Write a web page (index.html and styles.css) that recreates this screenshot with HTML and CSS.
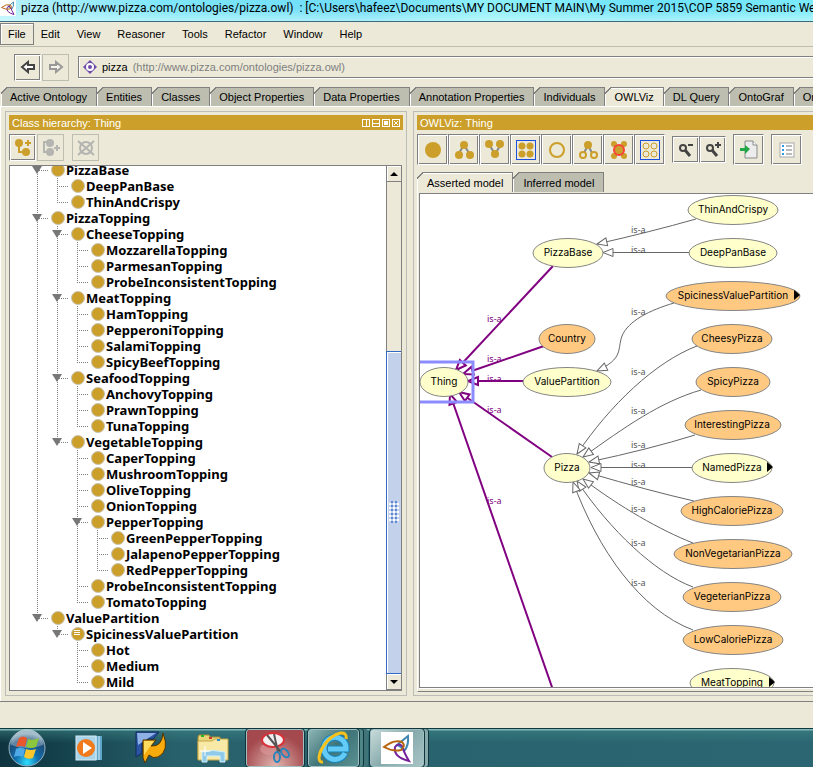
FILE: index.html
```html
<!DOCTYPE html>
<html lang="en">
<head>
<meta charset="utf-8">
<title>pizza (http://www.pizza.com/ontologies/pizza.owl)</title>
<link rel="stylesheet" href="styles.css">
</head>
<body>
<svg class="defs" width="0" height="0" aria-hidden="true">
  <defs>
    <symbol id="protege" viewBox="0 0 32 32">
      <g fill="none" stroke-width="2">
        <path d="M27 4Q28 14 23 19Q20 14 16 13Q21 9 27 4Z" stroke="#3f86b0"/>
        <path d="M28 29Q12 25 14 15Q18 10 22 15Q22 19 28 29Z" stroke="#74209a"/>
        <path d="M3 15Q13 7 21 10Q25 14 20 18Q12 20 3 15Z" stroke="#b8640c"/>
      </g>
    </symbol>
  </defs>
</svg>

<header class="titlebar">
  <svg class="app-icon" width="16" height="16"><rect width="16" height="16" fill="#fff"/><use href="#protege" width="16" height="16"/></svg>
  <span class="title-text">pizza (http://www.pizza.com/ontologies/pizza.owl)&nbsp; : [C:\Users\hafeez\Documents\MY DOCUMENT MAIN\My Summer 2015\COP 5859 Semantic Web</span>
</header>

<nav class="menubar">
  <button class="menu open">File</button>
  <button class="menu">Edit</button>
  <button class="menu">View</button>
  <button class="menu">Reasoner</button>
  <button class="menu">Tools</button>
  <button class="menu">Refactor</button>
  <button class="menu">Window</button>
  <button class="menu">Help</button>
</nav>

<div class="locationbar">
  <button class="tool" aria-label="Back"><svg width="16" height="14" fill="#fff" stroke="#444" stroke-width="2"><path d="M2 7L8 2V5H14V9H8V12Z"/></svg></button>
  <button class="tool disabled" aria-label="Forward" disabled><svg width="16" height="14" fill="#f6f4ea" stroke="#999" stroke-width="2"><path d="M14 7L8 2V5H2V9H8V12Z"/></svg></button>
  <div class="address">
    <svg width="14" height="14"><path d="M7 0L14 7L7 14L0 7Z" fill="#6f4ca8"/><circle cx="7" cy="7" r="3" fill="none" stroke="#fff" stroke-width="2"/></svg>
    <span>pizza</span><span class="iri">(http://www.pizza.com/ontologies/pizza.owl)</span>
  </div>
</div>

<nav class="tabs main-tabs">
  <button class="tab">Active Ontology</button>
  <button class="tab">Entities</button>
  <button class="tab">Classes</button>
  <button class="tab">Object Properties</button>
  <button class="tab">Data Properties</button>
  <button class="tab">Annotation Properties</button>
  <button class="tab">Individuals</button>
  <button class="tab active">OWLViz</button>
  <button class="tab">DL Query</button>
  <button class="tab">OntoGraf</button>
  <button class="tab">Ontology Differences</button>
</nav>

<main class="workspace">
  <section class="panel hierarchy">
    <h2 class="panel-title">Class hierarchy: Thing
      <svg width="38" height="8" fill="none" stroke="#fff" stroke-width="1" shape-rendering="crispEdges"><path d="M.5 .5H7.5V7.5H.5ZM4 0V8M10.500 .5H17.500V7.500H10.500ZM10 4H18M20.500 .5H27.500V7.500H20.500ZM30.500 .5H37.500V7.500H30.500Z"/><path d="M22 2H26V6H22Z" fill="#fff" stroke="none"/><path d="M32 2L36 6M36 2L32 6" shape-rendering="auto"/></svg>
    </h2>
    <div class="toolbar">
      <button class="tool" aria-label="Add subclass"><svg width="18" height="18" fill="#cc9f2a"><path d="M11 4H17M14 1V7M5 5V13H12" fill="none" stroke="#cc9f2a" stroke-width="2"/><circle cx="5" cy="4" r="4"/><circle cx="12" cy="13" r="4"/></svg></button>
      <button class="tool disabled" aria-label="Add sibling class" disabled><svg width="18" height="18" fill="#b4b4b0"><path d="M7 3H2V13H7M12 9H18M15 6V12" fill="none" stroke="#b4b4b0" stroke-width="2"/><circle cx="8" cy="4" r="4"/><circle cx="8" cy="13" r="4"/></svg></button>
      <button class="tool disabled spaced" aria-label="Delete class" disabled><svg width="18" height="18" fill="none" stroke="#b4b4b0" stroke-width="2"><circle cx="9" cy="9" r="6"/><path d="M1 2L17 16M17 2L1 16"/></svg></button>
    </div>
    <div class="treebox">
      <div class="tree-view">
        <ul class="tree root">
          <li class="branch"><span class="row open">PizzaBase</span>
            <ul class="tree"><li><span class="row">DeepPanBase</span></li><li><span class="row">ThinAndCrispy</span></li></ul>
          </li>
          <li class="branch"><span class="row open">PizzaTopping</span>
            <ul class="tree">
              <li><span class="row open">CheeseTopping</span>
                <ul class="tree"><li><span class="row">MozzarellaTopping</span></li><li><span class="row">ParmesanTopping</span></li><li><span class="row">ProbeInconsistentTopping</span></li></ul>
              </li>
              <li><span class="row open">MeatTopping</span>
                <ul class="tree"><li><span class="row">HamTopping</span></li><li><span class="row">PepperoniTopping</span></li><li><span class="row">SalamiTopping</span></li><li><span class="row">SpicyBeefTopping</span></li></ul>
              </li>
              <li><span class="row open">SeafoodTopping</span>
                <ul class="tree"><li><span class="row">AnchovyTopping</span></li><li><span class="row">PrawnTopping</span></li><li><span class="row">TunaTopping</span></li></ul>
              </li>
              <li><span class="row open">VegetableTopping</span>
                <ul class="tree">
                  <li><span class="row">CaperTopping</span></li><li><span class="row">MushroomTopping</span></li><li><span class="row">OliveTopping</span></li><li><span class="row">OnionTopping</span></li>
                  <li><span class="row open">PepperTopping</span>
                    <ul class="tree"><li><span class="row">GreenPepperTopping</span></li><li><span class="row">JalapenoPepperTopping</span></li><li><span class="row">RedPepperTopping</span></li></ul>
                  </li>
                  <li><span class="row">ProbeInconsistentTopping</span></li><li><span class="row">TomatoTopping</span></li>
                </ul>
              </li>
            </ul>
          </li>
          <li class="branch"><span class="row open">ValuePartition</span>
            <ul class="tree">
              <li><span class="row open defined">SpicinessValuePartition</span>
                <ul class="tree"><li><span class="row">Hot</span></li><li><span class="row">Medium</span></li><li><span class="row">Mild</span></li></ul>
              </li>
            </ul>
          </li>
        </ul>
      </div>
      <div class="scrollbar">
        <button class="arrow" aria-label="Scroll up"><svg width="8" height="4"><path d="M0 4L4 0L8 4Z"/></svg></button>
        <div class="track"></div>
        <div class="thumb"><span class="grip"></span></div>
        <button class="arrow" aria-label="Scroll down"><svg width="8" height="4"><path d="M0 0L4 4L8 0Z"/></svg></button>
      </div>
    </div>
  </section>

  <section class="panel viz">
    <h2 class="panel-title">OWLViz: Thing</h2>
    <div class="toolbar">
      <button class="tool big" aria-label="Show class"><svg width="22" height="22" fill="#cc9f2a"><circle cx="11" cy="11" r="8"/></svg></button>
      <button class="tool big" aria-label="Show subclasses"><svg width="22" height="22" fill="#cc9f2a"><path d="M6 14L11 6L16 14" fill="none" stroke="#888" stroke-width="2"/><circle cx="11" cy="6" r="4"/><circle cx="6" cy="16" r="4"/><circle cx="17" cy="16" r="4"/></svg></button>
      <button class="tool big" aria-label="Show superclasses"><svg width="22" height="22" fill="#cc9f2a"><path d="M6 7L11 15L16 7" fill="none" stroke="#888" stroke-width="2"/><circle cx="11" cy="15" r="4"/><circle cx="5" cy="5" r="4"/><circle cx="16" cy="5" r="4"/></svg></button>
      <button class="tool big" aria-label="Show all classes"><svg width="22" height="22" fill="#cc9f2a"><rect x="1.500" y="1.500" width="19" height="19" fill="none" stroke="#1e4fd8"/><circle cx="7" cy="7" r="3.500"/><circle cx="15" cy="7" r="3.500"/><circle cx="7" cy="15" r="3.500"/><circle cx="15" cy="15" r="3.500"/></svg></button>
      <button class="tool big" aria-label="Hide class"><svg width="22" height="22" fill="none" stroke="#cc9f2a" stroke-width="2"><circle cx="11" cy="11" r="7"/></svg></button>
      <button class="tool big" aria-label="Hide subclasses"><svg width="22" height="22" fill="none" stroke="#cc9f2a" stroke-width="2"><path d="M7 14L11 6L15 14" stroke="#888"/><circle cx="11" cy="6" r="3" fill="#cc9f2a"/><circle cx="6" cy="16" r="3" fill="#ece9d8"/><circle cx="17" cy="16" r="3" fill="#ece9d8"/></svg></button>
      <button class="tool big" aria-label="Hide past radius"><svg width="22" height="22" fill="#cc9f2a"><path d="M5 5L17 17M17 5L5 17" stroke="#888" stroke-width="2"/><circle cx="6" cy="5" r="3"/><circle cx="16" cy="5" r="3"/><circle cx="6" cy="17" r="3"/><circle cx="16" cy="17" r="3"/><circle cx="11" cy="11" r="5" stroke="#fa4238" stroke-width="2"/></svg></button>
      <button class="tool big" aria-label="Hide all classes"><svg width="22" height="22" fill="none" stroke="#cc9f2a"><rect x="1.500" y="1.500" width="19" height="19" stroke="#1e4fd8"/><circle cx="7" cy="7" r="3"/><circle cx="15" cy="7" r="3"/><circle cx="7" cy="15" r="3"/><circle cx="15" cy="15" r="3"/></svg></button>
      <button class="tool spaced" aria-label="Zoom out"><svg width="18" height="18" fill="none" stroke="#444" stroke-width="2"><circle cx="6" cy="7" r="3"/><path d="M8 9L13 15" stroke-width="3"/><path d="M11 4H16"/></svg></button>
      <button class="tool" aria-label="Zoom in"><svg width="18" height="18" fill="none" stroke="#444" stroke-width="2"><circle cx="6" cy="7" r="3"/><path d="M8 9L13 15" stroke-width="3"/><path d="M11 4H17M14 1V7"/></svg></button>
      <button class="tool big spaced" aria-label="Export"><svg width="22" height="22"><path d="M7 2H15L19 6V19H7Z" fill="#ececec" stroke="#8a8a8a"/><path d="M15 2V6H19" fill="#fff" stroke="#8a8a8a"/><path d="M2 9H7V6L12 10L7 15V12H2Z" fill="#22a746"/></svg></button>
      <button class="tool big spaced" aria-label="Options"><svg width="22" height="22"><rect x="4" y="4" width="14" height="14" fill="#fff" stroke="#aaa"/><path d="M6 7H8M6 11H8M6 15H8" stroke="#2d9be0" stroke-width="2"/><path d="M10 7H16M10 11H16M10 15H16" stroke="#777"/></svg></button>
    </div>
    <div class="tabs model-tabs">
      <button class="tab active">Asserted model</button>
      <button class="tab">Inferred model</button>
    </div>
    <div class="model-pane">
    <div class="canvas">
      <svg class="graph" width="800" height="493">
        <defs>
          <marker id="arrow" markerUnits="userSpaceOnUse" markerWidth="13" markerHeight="12" refX="11" refY="6" orient="auto"><path d="M11 6L1 2V10Z" fill="#fff" stroke="#666"/></marker>
          <marker id="arrow-hot" markerUnits="userSpaceOnUse" markerWidth="14" markerHeight="14" refX="12" refY="7" orient="auto"><path d="M12 7L2 3V11Z" fill="#fff" stroke="#800080" stroke-width="2"/></marker>
        </defs>
        <g transform="translate(-420 -194)">
          <g class="edge">
            <path d="M696 219Q650 232 597 244"/><path d="M689 252.500H603"/>
            <path d="M674 303C650 310 628 321 622 336C617 350 624 358 597 371"/>
            <path d="M697 346C655 362 610 405 577 454"/><path d="M701 390C660 402 625 427 583 457"/>
            <path d="M695 435Q650 449 589 462"/><path d="M692 467.500H591"/><path d="M694 501Q650 491 589 473"/>
            <path d="M693 543C660 530 620 507 583 479"/><path d="M693 587C655 573 610 530 577 481"/><path d="M693 630C640 610 598 550 573 482"/>
          </g>
          <g class="hot">
            <path d="M553 266L456 370"/><path d="M544 346L463 374"/><path d="M523 381H468"/><path d="M552 457L459 392"/><path d="M553 690L450 394"/>
          </g>
          <g class="label">
            <text x="631" y="233">is-a</text><text x="631" y="253">is-a</text><text x="631" y="315">is-a</text><text x="631" y="375">is-a</text><text x="631" y="414">is-a</text><text x="631" y="448">is-a</text><text x="631" y="468">is-a</text><text x="631" y="485">is-a</text><text x="631" y="512">is-a</text><text x="631" y="546">is-a</text><text x="631" y="586">is-a</text>
          </g>
          <g class="label hot-label">
            <text x="487" y="322">is-a</text><text x="487" y="362">is-a</text><text x="487" y="382">is-a</text><text x="487" y="413">is-a</text><text x="487" y="504">is-a</text>
          </g>
          <g class="node">
            <ellipse cx="733" cy="210" rx="45" ry="14.500"/><ellipse cx="733" cy="253" rx="44" ry="14.500"/><ellipse cx="568" cy="253" rx="35" ry="14.500"/>
            <ellipse cx="567" cy="382" rx="44" ry="14.500"/><ellipse cx="444" cy="382" rx="24" ry="14.500"/><ellipse cx="732" cy="468" rx="40" ry="14.500"/>
            <ellipse cx="567" cy="468" rx="23" ry="14.500"/><ellipse cx="732" cy="683" rx="42" ry="14.500"/>
          </g>
          <g class="node defined-node">
            <ellipse cx="733" cy="296" rx="67" ry="14.500"/><ellipse cx="567" cy="339" rx="28" ry="14.500"/><ellipse cx="732" cy="339" rx="40" ry="14.500"/>
            <ellipse cx="733" cy="382" rx="37" ry="14.500"/><ellipse cx="733" cy="425" rx="48" ry="14.500"/><ellipse cx="732" cy="511" rx="51" ry="14.500"/>
            <ellipse cx="733" cy="554" rx="59" ry="14.500"/><ellipse cx="732" cy="597" rx="49" ry="14.500"/><ellipse cx="733" cy="640" rx="50" ry="14.500"/>
          </g>
          <path d="M794 290L800 295L794 300ZM767 462L773 467L767 472ZM769 677L775 682L769 687Z"/>
          <g class="name">
            <text x="733" y="213">ThinAndCrispy</text><text x="733" y="256">DeepPanBase</text><text x="568" y="256">PizzaBase</text><text x="733" y="299">SpicinessValuePartition</text>
            <text x="567" y="342">Country</text><text x="732" y="342">CheesyPizza</text><text x="567" y="385">ValuePartition</text><text x="733" y="385">SpicyPizza</text>
            <text x="444" y="385">Thing</text><text x="732" y="428">InterestingPizza</text><text x="732" y="471">NamedPizza</text><text x="567" y="471">Pizza</text>
            <text x="732" y="514">HighCaloriePizza</text><text x="733" y="557">NonVegetarianPizza</text><text x="732" y="600">VegeterianPizza</text><text x="733" y="643">LowCaloriePizza</text><text x="732" y="686">MeatTopping</text>
          </g>
          <path d="M420 362H473V402H420" fill="none" stroke="#8c8cff" stroke-width="3"/>
        </g>
      </svg>
    </div>
    </div>
  </section>
</main>

<div class="statusbar"></div>

<footer class="taskbar">
  <button class="launch" aria-label="Start">
    <svg width="38" height="38">
      <defs><radialGradient id="orb" cx=".5" cy=".9" r=".8"><stop offset="0" stop-color="#2fe0ff"/><stop offset=".4" stop-color="#126fae"/><stop offset=".8" stop-color="#1c4c78"/><stop offset="1" stop-color="#7fa3b5"/></radialGradient></defs>
      <circle cx="19" cy="19" r="18" fill="url(#orb)" stroke="#93b4c0"/><path d="M3 16A16 16 0 0 1 35 16Q19 22 3 16Z" fill="#fff" opacity=".3"/>
      <path d="M11 9Q15 6 19 9L17 18Q13 16 8 18Z" fill="#e8582c"/><path d="M20 10Q25 12 31 9L28 18Q23 20 18 18Z" fill="#8cc63c"/>
      <path d="M8 20Q12 17 17 20L15 28Q11 26 6 28Z" fill="#4fa9e6"/><path d="M18 20Q23 22 28 20L25 29Q20 31 16 28Z" fill="#fbc72b"/>
    </svg>
  </button>
  <button class="launch" aria-label="Media player">
    <svg width="28" height="28"><path d="M18 2H27V26H18Z" fill="#5fa6cc"/><path d="M21 2V26M24 2V26" stroke="#d8eef8"/><rect x="1" y="2" width="20" height="24" fill="#a9d3e8" stroke="#d5ecf5"/><circle cx="11" cy="14" r="9" fill="#f07a1c"/><path d="M8 8L17 14L8 20Z" fill="#fff"/></svg>
  </button>
  <button class="launch" aria-label="Updater">
    <svg width="34" height="34"><path d="M2 1H25L19 8H11L8 11V22L2 26Z" fill="#2b55a4" stroke="#122a5c"/><path d="M3 2H22L4 14Z" fill="#8fb2e6"/><path d="M9 9H22L17 15Q28 16 29 2Q36 20 24 26Q19 28 15 24L11 32L9 27Z" fill="#f9ab0e" stroke="#513300"/><path d="M10 10H20L10 24Z" fill="#ffdc60"/></svg>
  </button>
  <button class="launch" aria-label="Explorer">
    <svg width="34" height="32"><path d="M3 3H13L14 5H24V9H31V27H2V5Z" fill="#ead478" stroke="#a98d35"/><path d="M2 9H16L19 7H32V28H2Z" fill="#f8eaa6" stroke="#c4a646"/><path d="M5 3H8V5H5Z" fill="#28b428"/><path d="M13 5H16V7H13Z" fill="#d23a2a"/><path d="M21 7H24V9H21Z" fill="#2a8ad2"/><path d="M6 30V20Q17 17 29 20V30H24V24H11V30Z" fill="#8fcbe8" stroke="#d2effa"/><path d="M9 14V24M4 19H14" stroke="#fff"/></svg>
  </button>
  <button class="task snip" aria-label="Snipping Tool">
    <svg width="32" height="34"><ellipse cx="11" cy="18" rx="10" ry="6" fill="#d99" opacity=".6"/><ellipse cx="14" cy="9" rx="11" ry="7" fill="#f4f0f2" stroke="#d83238" stroke-width="2"/><path d="M8 4L22 21M15 3L19 21" stroke="#555" stroke-width="2"/><ellipse cx="18" cy="26" rx="3" ry="5" fill="none" stroke="#2684bd" stroke-width="2"/><ellipse cx="26" cy="22" rx="3" ry="5" transform="rotate(-40 26 22)" fill="none" stroke="#2684bd" stroke-width="2"/></svg>
  </button>
  <button class="task ie" aria-label="Internet Explorer">
    <svg width="34" height="34"><path d="M28 22A11 11 0 1 1 29 18H11" fill="none" stroke="#1683bd" stroke-width="7"/><path d="M28 22A11 11 0 1 1 29 18H11" fill="none" stroke="#63cbf5" stroke-width="5"/><path d="M29 8C31 -2 17 1 8 13C1 22 0 32 6 31" fill="none" stroke="#f5c21d" stroke-width="3"/></svg>
  </button>
  <button class="task current" aria-label="Protégé">
    <svg width="32" height="32"><rect width="32" height="32" fill="#fff"/><use href="#protege" width="32" height="32"/></svg>
  </button>
</footer>
</body>
</html>
```
FILE: styles.css
```css
:root {
  --face: #ece9d8;
  --shade: #bdbeb0;
  --line: #808080;
  --gold: #cb9f2a;
}

* { box-sizing: border-box; }

body {
  margin: 0;
  height: 100vh;
  overflow: hidden;
  display: flex;
  flex-direction: column;
  background: var(--face);
  color: #000;
  font: 11px/14px "Liberation Sans", Arial, sans-serif;
}

button {
  font: inherit;
  color: inherit;
  padding: 0;
  border: 0;
  background: none;
  white-space: nowrap;
}

svg { display: block; flex: none; }
.defs { position: absolute; }

/* Window title */
.titlebar {
  display: flex;
  gap: 5px;
  height: 22px;
  border-bottom: 1px solid #3c6a7c;
  background: linear-gradient(#c8fbff00 40%, #d8feff90), linear-gradient(90deg, #b9f0fb, #7fe6fa 20%, #6fdcf8 45%, #8ff0fb 60%, #6ee2fa 80%, #7beafb);
  overflow: hidden;
}
.title-text {
  font: 12px/16px Roboto, "Open Sans", sans-serif;
  white-space: nowrap;
}

/* Menus */
.menubar {
  display: flex;
  height: 25px;
  padding: 1px 0;
  border-bottom: 1px solid var(--shade);
}
.menu { padding: 0 10px 0 7px; }
.menu.open { padding: 0 7px; border: 1px solid var(--line); box-shadow: inset 1px 1px #fff; }

/* Location */
.locationbar {
  display: flex;
  align-items: center;
  gap: 1px;
  height: 40px;
  padding-left: 14px;
}
.tool {
  display: flex;
  align-items: center;
  justify-content: center;
  flex: none;
  width: 27px;
  height: 27px;
  border: 1px solid var(--line);
  border-right-color: #fff;
  border-bottom-color: #fff;
  box-shadow: inset 1px 1px #fff, inset -1px -1px var(--line);
}
.tool.disabled { border: 1px solid var(--shade); box-shadow: none; }
.tool.big { width: 31px; height: 31px; }
.address {
  flex: 1;
  display: flex;
  align-items: center;
  gap: 5px;
  height: 22px;
  margin-left: 8px;
  padding-left: 4px;
  border: 1px solid var(--line);
  border-right: 0;
  box-shadow: inset 1px 1px #fff, 0 1px #fff;
}
.iri { color: #808080; }

/* Tabs */
.tabs { display: flex; flex: none; overflow: hidden; }
.tab {
  flex: none;
  height: 19px;
  padding: 1px 9px 0;
  border-right: 1px solid var(--line);
  background:
    linear-gradient(135deg, var(--face) 4px, var(--line) 4px 5px, transparent 5px) 0 0 / 7px 7px no-repeat,
    linear-gradient(var(--line), var(--line)) 0 0 / 100% 1px no-repeat,
    linear-gradient(#fff, #fff) 0 0 / 1px 100% no-repeat,
    var(--shade);
}
.tab.active {
  background:
    linear-gradient(135deg, var(--face) 4px, var(--line) 4px 5px, transparent 5px) 0 0 / 7px 7px no-repeat,
    linear-gradient(var(--line), var(--line)) 0 0 / 100% 1px no-repeat,
    linear-gradient(#fff, #fff) 0 1px / 100% 1px no-repeat,
    linear-gradient(#fff, #fff) 0 0 / 1px 100% no-repeat,
    var(--face);
}
.main-tabs { padding-left: 1px; }

/* Panels */
.workspace {
  flex: 1;
  min-height: 0;
  display: flex;
  gap: 6px;
  padding: 4px 0 5px 4px;
  border-top: 1px solid #fff;
  border-left: 1px solid #fff;
}
.panel {
  display: flex;
  flex-direction: column;
  min-width: 0;
  padding: 3px;
  border: 1px solid #bdbdb8;
}
.hierarchy { flex: 0 0 402px; }
.viz { flex: 1; padding-right: 0; border-right: 0; overflow: hidden; }
.panel-title {
  display: flex;
  align-items: center;
  justify-content: space-between;
  flex: none;
  height: 15px;
  margin: 0;
  padding: 0 3px;
  background: var(--gold);
  color: #fff;
  font: inherit;
}
.toolbar { display: flex; align-items: center; gap: 1px; padding-top: 4px; flex: none; }
.viz .toolbar { gap: 0; }
.spaced { margin-left: 7px; }

/* Class tree */
.treebox {
  flex: 1;
  min-height: 0;
  display: flex;
  margin: 4px 1px 1px 0;
  border: 1px solid var(--line);
  background: #fff;
}
.tree-view { flex: 1; overflow: hidden; }
.tree { margin: 0; padding: 0 0 0 20px; list-style: none; }
.tree.root { margin: -4px 0 0; padding-left: 27px; }
.tree li {
  background: repeating-linear-gradient(var(--line) 0 1px, transparent 1px 2px) 0 0 / 1px 100% no-repeat;
}
.tree li:last-child { background-size: 1px 8px; }
.row {
  display: flex;
  align-items: center;
  height: 16px;
  font: bold 13px/16px "Noto Sans", Tahoma, sans-serif;
  background: repeating-linear-gradient(90deg, var(--line) 0 1px, transparent 1px 2px) 0 8px / 12px 1px no-repeat;
}
.row::before {
  content: "";
  flex: none;
  width: 12px;
  height: 12px;
  margin: 0 1px 0 14px;
  border: 1px solid #c9c3b4;
  border-radius: 50%;
  background: var(--gold);
}
.row.defined::before {
  background: linear-gradient(#fff, #fff) 2px 2px / 6px 1px no-repeat, linear-gradient(#fff, #fff) 2px 4px / 6px 1px no-repeat, linear-gradient(#fff, #fff) 2px 6px / 6px 1px no-repeat, var(--gold);
}
.row.open { margin-left: -5px; padding-left: 5px; background-position: 5px 8px; position: relative; }
.row.open::after {
  content: "";
  position: absolute;
  left: 0;
  top: 4px;
  border: 5px solid transparent;
  border-top: 8px solid #777;
  border-bottom: 0;
}

.scrollbar { display: flex; flex-direction: column; width: 15px; border-left: 1px solid var(--line); background: var(--face); }
.arrow {
  display: flex;
  align-items: center;
  justify-content: center;
  height: 16px;
  border-bottom: 1px solid var(--line);
  box-shadow: inset 1px 1px #fff;
}
.track { flex: 170; }
.thumb {
  flex: 323;
  display: flex;
  align-items: center;
  justify-content: center;
  margin-left: -1px;
  border: 1px solid #316ac5;
  border-right: 0;
  background: #c3d2ea;
  box-shadow: inset 1px 1px #fff;
}
.grip {
  width: 10px;
  height: 22px;
  background:
    linear-gradient(#316ac5, #316ac5) 0 0 / 0 0,
    conic-gradient(#5c8ad4 25%, transparent 0 50%, #fff 0 75%, transparent 0) 0 0 / 4px 4px;
}

/* Graph */
.model-tabs { margin-top: 7px; }
.model-tabs .tab { height: 20px; padding: 1px 9px 0 10px; }
.model-pane {
  flex: 1;
  min-height: 0;
  display: flex;
  padding: 1px 0 3px 1px;
  border-left: 1px solid #fff;
  border-bottom: 1px solid var(--line);
}
.canvas {
  flex: 1;
  min-height: 0;
  overflow: hidden;
  border: 1px solid var(--line);
  border-right: 0;
  background: #fff;
  box-shadow: 0 1px #fff;
}
.edge path { fill: none; stroke: #666; marker-end: url(#arrow); }
.hot path { fill: none; stroke: #800080; stroke-width: 2; marker-end: url(#arrow-hot); }
.label { font: 9px "Noto Sans", sans-serif; fill: #555; }
.hot-label { fill: #800080; }
.node ellipse { fill: #ffffcb; stroke: #858585; }
.defined-node ellipse { fill: #ffc981; }
.name { font: 10px Inter, Arial, sans-serif; text-anchor: middle; }

/* Bottom */
.statusbar { height: 27px; border-top: 1px solid var(--line); flex: none; }
.taskbar {
  display: flex;
  flex: none;
  height: 39px;
  padding-left: 8px;
  border-top: 1px solid #10393f;
  background: linear-gradient(#7fb6b8 0 1px, #3f868680 2px, #2b6a7200 14px), linear-gradient(90deg, #0f3440, #14414c 60px, #28616c 180px, #2b6672);
}
.launch { display: flex; align-items: center; justify-content: center; width: 62px; }
.launch:first-child { width: 38px; margin-right: 12px; }
.task {
  display: flex;
  align-items: center;
  justify-content: center;
  border: 1px solid #9fc0c2;
  outline: 1px solid #12343b;
  border-radius: 3px;
}
.snip { width: 58px; margin-left: 2px; background: radial-gradient(circle at 50% 100%, #e0b4ae, #a4494e 70%); }
.ie { width: 51px; margin-left: 4px; background: linear-gradient(135deg, #8db5b4, #3f7478 50%, #5a9192); box-shadow: 4px 0 #4f8688, 5px 0 #12343b, 9px 0 #3f7478; }
.current { width: 54px; margin-left: 11px; background: linear-gradient(135deg, #c8dbda, #86aaac 50%, #a9c5c5); box-shadow: 4px 0 #86aaac, 5px 0 #12343b; }
```
